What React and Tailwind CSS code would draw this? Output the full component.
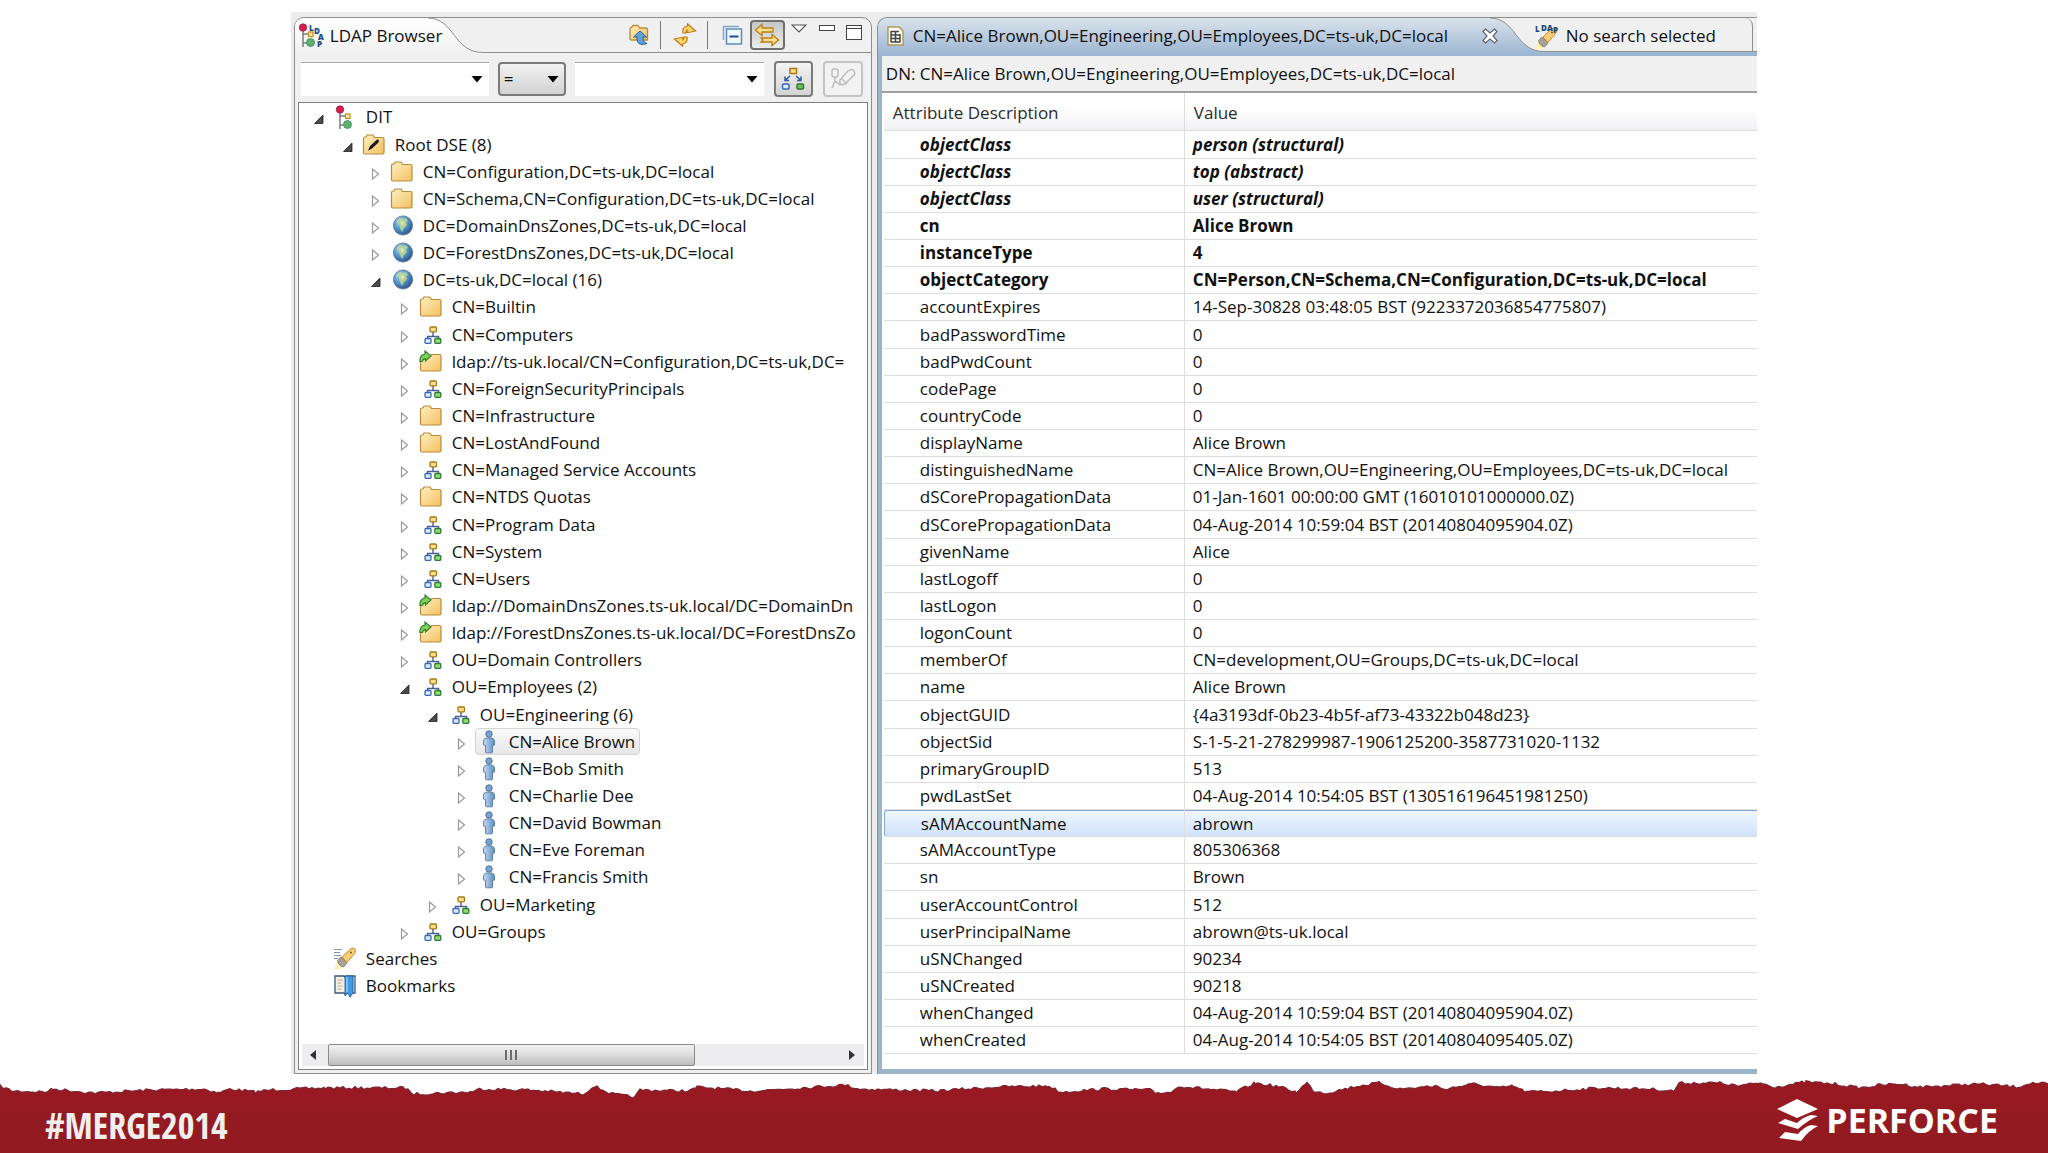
import { useState } from 'react'
import clsx from 'clsx'

const TREE = [
  { level: 0, icon: 'dit', label: 'DIT', open: true },
  { level: 1, icon: 'root', label: 'Root DSE (8)', open: true },
  { level: 2, icon: 'folder', label: 'CN=Configuration,DC=ts-uk,DC=local' },
  { level: 2, icon: 'folder', label: 'CN=Schema,CN=Configuration,DC=ts-uk,DC=local' },
  { level: 2, icon: 'globe', label: 'DC=DomainDnsZones,DC=ts-uk,DC=local' },
  { level: 2, icon: 'globe', label: 'DC=ForestDnsZones,DC=ts-uk,DC=local' },
  { level: 2, icon: 'globe', label: 'DC=ts-uk,DC=local (16)', open: true },
  { level: 3, icon: 'folder', label: 'CN=Builtin' },
  { level: 3, icon: 'org', label: 'CN=Computers' },
  { level: 3, icon: 'link', label: 'ldap://ts-uk.local/CN=Configuration,DC=ts-uk,DC=' },
  { level: 3, icon: 'org', label: 'CN=ForeignSecurityPrincipals' },
  { level: 3, icon: 'folder', label: 'CN=Infrastructure' },
  { level: 3, icon: 'folder', label: 'CN=LostAndFound' },
  { level: 3, icon: 'org', label: 'CN=Managed Service Accounts' },
  { level: 3, icon: 'folder', label: 'CN=NTDS Quotas' },
  { level: 3, icon: 'org', label: 'CN=Program Data' },
  { level: 3, icon: 'org', label: 'CN=System' },
  { level: 3, icon: 'org', label: 'CN=Users' },
  { level: 3, icon: 'link', label: 'ldap://DomainDnsZones.ts-uk.local/DC=DomainDn' },
  { level: 3, icon: 'link', label: 'ldap://ForestDnsZones.ts-uk.local/DC=ForestDnsZo' },
  { level: 3, icon: 'org', label: 'OU=Domain Controllers' },
  { level: 3, icon: 'org', label: 'OU=Employees (2)', open: true },
  { level: 4, icon: 'org', label: 'OU=Engineering (6)', open: true },
  { level: 5, icon: 'person', label: 'CN=Alice Brown' },
  { level: 5, icon: 'person', label: 'CN=Bob Smith' },
  { level: 5, icon: 'person', label: 'CN=Charlie Dee' },
  { level: 5, icon: 'person', label: 'CN=David Bowman' },
  { level: 5, icon: 'person', label: 'CN=Eve Foreman' },
  { level: 5, icon: 'person', label: 'CN=Francis Smith' },
  { level: 4, icon: 'org', label: 'OU=Marketing' },
  { level: 3, icon: 'org', label: 'OU=Groups' },
  { level: 0, icon: 'searches', label: 'Searches', leaf: true },
  { level: 0, icon: 'bookmarks', label: 'Bookmarks', leaf: true },
]

const ENTRY_DN = 'CN=Alice Brown,OU=Engineering,OU=Employees,DC=ts-uk,DC=local'

// kind: 'class' = object class (bold italic), 'must' = mandatory attribute (bold)
const ATTRIBUTES = [
  ['objectClass', 'person (structural)', 'class'],
  ['objectClass', 'top (abstract)', 'class'],
  ['objectClass', 'user (structural)', 'class'],
  ['cn', 'Alice Brown', 'must'],
  ['instanceType', '4', 'must'],
  ['objectCategory', 'CN=Person,CN=Schema,CN=Configuration,DC=ts-uk,DC=local', 'must'],
  ['accountExpires', '14-Sep-30828 03:48:05 BST (9223372036854775807)'],
  ['badPasswordTime', '0'],
  ['badPwdCount', '0'],
  ['codePage', '0'],
  ['countryCode', '0'],
  ['displayName', 'Alice Brown'],
  ['distinguishedName', ENTRY_DN],
  ['dSCorePropagationData', '01-Jan-1601 00:00:00 GMT (16010101000000.0Z)'],
  ['dSCorePropagationData', '04-Aug-2014 10:59:04 BST (20140804095904.0Z)'],
  ['givenName', 'Alice'],
  ['lastLogoff', '0'],
  ['lastLogon', '0'],
  ['logonCount', '0'],
  ['memberOf', 'CN=development,OU=Groups,DC=ts-uk,DC=local'],
  ['name', 'Alice Brown'],
  ['objectGUID', '{4a3193df-0b23-4b5f-af73-43322b048d23}'],
  ['objectSid', 'S-1-5-21-278299987-1906125200-3587731020-1132'],
  ['primaryGroupID', '513'],
  ['pwdLastSet', '04-Aug-2014 10:54:05 BST (130516196451981250)'],
  ['sAMAccountName', 'abrown'],
  ['sAMAccountType', '805306368'],
  ['sn', 'Brown'],
  ['userAccountControl', '512'],
  ['userPrincipalName', 'abrown@ts-uk.local'],
  ['uSNChanged', '90234'],
  ['uSNCreated', '90218'],
  ['whenChanged', '04-Aug-2014 10:59:04 BST (20140804095904.0Z)'],
  ['whenCreated', '04-Aug-2014 10:54:05 BST (20140804095405.0Z)'],
]

function Gradients() {
  return (
    <svg className="absolute h-0 w-0" aria-hidden="true">
      <defs>
        <linearGradient id="folderFill" x1="0" y1="0" x2="1" y2="1">
          <stop offset="0" stopColor="#fff0c0" />
          <stop offset="1" stopColor="#f3c060" />
        </linearGradient>
        <radialGradient id="globeFill" cx=".35" cy=".3" r=".8">
          <stop offset="0" stopColor="#a9d9ef" />
          <stop offset=".5" stopColor="#4f93c4" />
          <stop offset="1" stopColor="#2c4580" />
        </radialGradient>
        <linearGradient id="tabFill" x1="0" y1="0" x2="0" y2="1">
          <stop offset="0" stopColor="#ffffff" />
          <stop offset="1" stopColor="#f0f0f0" />
        </linearGradient>
        <linearGradient id="bodyFill" x1="0" y1="0" x2="1" y2="0">
          <stop offset="0" stopColor="#c4dcf3" />
          <stop offset="1" stopColor="#5d8cc0" />
        </linearGradient>
      </defs>
    </svg>
  )
}

function FolderShape() {
  return (
    <path
      d="M1.500 5.500q0-1.500 1.500-1.500h1l1-2h6l1.500 2.500h8q1.500 0 1.500 1.500v13.500q0 1.500-1.500 1.500h-17.500q-1.500 0-1.500-1.500z"
      fill="url(#folderFill)"
      stroke="#b98a3e"
      strokeWidth="1.200"
    />
  )
}

function DitShape() {
  return (
    <>
      <path d="M4 6v18M4 11h8M4 20h6" stroke="#7d7d7d" strokeWidth="1.500" fill="none" />
      <circle cx="4" cy="4.500" r="3.800" fill="#d0204c" stroke="#a01238" strokeWidth=".6" />
      <rect x="9.500" y="9" width="4.500" height="4.500" fill="#ffe9a0" stroke="#c08a1e" strokeWidth="1.200" />
      <circle cx="11.500" cy="19.500" r="4" fill="#5fb070" stroke="#3c8c50" strokeWidth=".8" />
    </>
  )
}

function FlashlightShape() {
  return (
    <>
      <path d="M1 22 5 12l6 6-4 5z" fill="#fff2b8" />
      <path d="M4.500 13.500 8 10l6 6-3.500 4q-5-1-6-6.500z" fill="#a9a096" stroke="#7c746a" strokeWidth=".8" />
      <path d="m9 10 9-8.500q3-1 4 .5t0 4L14 15.500z" fill="#f5cf74" stroke="#c08e3a" strokeWidth="1" />
      <circle cx="18" cy="5.500" r="1" fill="#7a5a20" />
    </>
  )
}

function TreeIcon({ name }) {
  return (
    <svg viewBox="0 0 24 24" className="h-6 w-6 shrink-0" aria-hidden="true">
      {name === 'dit' && (
        <g transform="translate(3 0)">
          <DitShape />
        </g>
      )}
      {(name === 'folder' || name === 'root') && <FolderShape />}
      {name === 'root' && <path d="M6 17.500 8 13l7-6.500 2 .5-.5 2.500-7 6.500z" fill="#1c1c1c" />}
      {name === 'link' && (
        <>
          <path
            d="M1.500 8q0-1.500 1.500-1.500h8l1.500-2h8q1.500 0 1.500 1.500v13.500q0 1.500-1.500 1.500h-17.500q-1.500 0-1.500-1.500z"
            fill="url(#folderFill)"
            stroke="#b98a3e"
            strokeWidth="1.200"
          />
          <path d="M1 11.500q-.5-6.500 5-7.500V1l6 5-5.500 5V8.500q-2.500 0-3 3z" fill="#7fd05a" stroke="#2e7d2a" strokeWidth="1.100" />
        </>
      )}
      {name === 'globe' && (
        <>
          <circle cx="13" cy="11.500" r="9.600" fill="url(#globeFill)" stroke="#5c7190" strokeWidth=".8" />
          <path d="m7 6 3-2 3 1 3-1 2 3-2 1 1 3-3 3-2 4-2-4-1-4-2-1z" fill="#b7d59a" opacity=".9" />
          <path d="m11 7 3 1-1 4-2-2z" fill="#efe3a4" />
        </>
      )}
      {name === 'org' && (
        <>
          <path d="M14 9v5M8.500 16v-2.500h11V16" fill="none" stroke="#4a5f94" strokeWidth="1.400" />
          <rect x="11" y="4" width="6.500" height="4.800" rx="1" fill="#f8e08a" stroke="#a87718" strokeWidth="1.300" />
          <rect x="6" y="15.500" width="6" height="4.800" rx="1" fill="#d9ebff" stroke="#3a66b0" strokeWidth="1.300" />
          <rect x="15.800" y="15.500" width="6" height="4.800" rx="1" fill="#8fdc70" stroke="#2c7a38" strokeWidth="1.300" />
        </>
      )}
      {name === 'person' && (
        <>
          <circle cx="13" cy="4" r="3.200" fill="#7ba3cf" stroke="#41699a" strokeWidth=".9" />
          <path
            d="M10 8h6q2.500 1 2.500 3v4l-2 .5V22q0 .8-1 .8h-5q-1 0-1-.8v-6.500l-2-.5v-4q0-2 2.500-3z"
            fill="url(#bodyFill)"
            stroke="#54799f"
            strokeWidth=".9"
          />
        </>
      )}
      {name === 'searches' && (
        <>
          <path d="M1 2.500h8M1 5.500h6M1 8.500h7M1 11.500h4" stroke="#7d93b8" strokeWidth="1.200" />
          <FlashlightShape />
        </>
      )}
      {name === 'bookmarks' && (
        <>
          <path d="M2 2h9l1 1 1-1h9v17h-9l-1 1-1-1H2z" fill="#f5efe2" stroke="#3c5878" strokeWidth="1.300" />
          <path d="M4.500 6h5M4.500 9h4M4.500 12h5M4.500 15h4" stroke="#b5ab98" strokeWidth="1" />
          <path d="M12 2v20l3-3 2 4 3-4V2z" fill="#3f9be0" stroke="#1f5f9c" strokeWidth=".9" />
          <path d="M14 3v15" stroke="#a9d6f8" strokeWidth="1.200" />
        </>
      )}
    </svg>
  )
}

function LdapLetters({ arc }) {
  const spots = arc
    ? [[10, 8], [15, 11], [19, 17], [18, 24]]
    : [[1, 8], [7, 7], [13, 7], [19, 9]]
  return 'LDAP'.split('').map((ch, i) => (
    <text key={i} x={spots[i][0]} y={spots[i][1]} className="fill-[#1c4a80] font-['Open_Sans',sans-serif] text-[8px] font-extrabold">
      {ch}
    </text>
  ))
}

function DropArrow() {
  return (
    <svg viewBox="0 0 12 7" className="h-[7px] w-3" aria-hidden="true">
      <path d="M.5 0h11L6 6.500z" fill="#000" />
    </svg>
  )
}

function ComboBox({ label, className }) {
  return (
    <div className={clsx('flex h-[34px] items-center border-t border-[#a9a9a9] bg-white pr-[6px]', className)}>
      <input type="text" aria-label={label} className="h-full w-full min-w-0 px-1 outline-none" />
      <button type="button" aria-label={`${label} history`}>
        <DropArrow />
      </button>
    </div>
  )
}

function ViewToolbar() {
  return (
    <div className="flex flex-1 items-center justify-end border-b border-[#8e8e8e] pr-[9px]">
      <button type="button" aria-label="Up">
        <svg viewBox="0 0 22 22" className="h-[22px] w-[22px]">
          <path d="M2 5q0-1.500 1.500-1.500L5 1.500h5L11.500 4H18q1.500 0 1.500 1.500V16H3.500Q2 16 2 14.500z" fill="url(#folderFill)" stroke="#b98a3e" strokeWidth="1.300" />
          <path d="m12 7 6.500 6H15q-.5 5 4 6.500-8 2.500-9.500-2Q9 15.500 9 13H5.500z" fill="#5ea4d6" stroke="#23608f" strokeWidth="1" />
        </svg>
      </button>
      <span className="ml-[10px] h-7 w-px bg-[#7a7a7a]" />
      <button type="button" aria-label="Refresh" className="ml-3">
        <svg viewBox="0 0 24 24" className="h-6 w-6" fill="#fbd66e" stroke="#bb7d17" strokeWidth="1.200">
          <path d="M10 10q-1-6 4.500-7V.8L18 4l4.500 4-4.500 1-4 .5V7q-1 .5-1 3z" />
          <path d="M14 14q1 6-4.500 7v2.200L6 20l-4.500-4 4.500-1 4-.5V17q1-.5 1-3z" />
        </svg>
      </button>
      <span className="ml-[10px] h-7 w-px bg-[#7a7a7a]" />
      <button type="button" aria-label="Collapse all" className="ml-[14px]">
        <svg viewBox="0 0 22 22" className="h-[22px] w-[22px]">
          <path d="M1.500 16V2.500H17" fill="none" stroke="#7fa6cf" strokeWidth="1.500" />
          <rect x="4.500" y="5" width="15" height="15" fill="#eef8ff" stroke="#5d8cba" strokeWidth="1.500" />
          <path d="M7.500 12.500h9" stroke="#1d4f91" strokeWidth="2" />
        </svg>
      </button>
      <button type="button" aria-label="Link with editor" aria-pressed="true" className="ml-[6px] flex h-[30px] w-[35px] items-center justify-center rounded-[4px] border-2 border-[#6f6f6f] bg-linear-to-b from-[#c6c6c6] to-[#ececec]">
        <svg viewBox="0 0 26 26" className="h-[26px] w-[26px] shrink-0" fill="#fde08a" stroke="#bb7d17" strokeWidth="1.300">
          <path d="M1.500 8 8 2.500v3.500h11v4H8v3.500z" />
          <path d="m24.500 18-6.500-5.500V16H7l2 2-2 2h11v3.500z" />
        </svg>
      </button>
      <button type="button" aria-label="View menu" className="ml-[6px] self-start pt-[6px]">
        <svg viewBox="0 0 16 9" className="h-[9px] w-4">
          <path d="M1 1h14L8 8z" fill="#fff" stroke="#555" strokeWidth="1.200" />
        </svg>
      </button>
      <button type="button" aria-label="Minimize" className="ml-3 self-start pt-[7px]">
        <span className="block h-[6px] w-4 border border-[#444] bg-white" />
      </button>
      <button type="button" aria-label="Maximize" className="ml-[11px] self-start pt-[7px]">
        <span className="block h-[15px] w-4 border border-[#444] bg-white">
          <span className="mt-[2px] block h-px bg-[#444]" />
        </span>
      </button>
    </div>
  )
}

function TreeRow({ node, selected, onSelect }) {
  return (
    <li
      role="treeitem"
      aria-selected={selected}
      className="flex h-[27px] items-center nth-[7n+1]:h-[28px]"
      style={{ paddingLeft: 15 + Math.round(node.level * 28.6) }}
    >
      <button type="button" aria-label={`Toggle ${node.label}`} disabled={node.leaf} className="mr-2 w-[10px] shrink-0 pt-1">
        {!node.leaf && (
          <svg viewBox="0 0 10 12" className="h-3 w-[10px]">
            {node.open ? (
              <path d="M9 2v8.500H.5z" fill="#4a4a4a" stroke="#222" strokeWidth=".8" />
            ) : (
              <path d="M1.500 1v10l6-5z" fill="#fff" stroke="#9a9a9a" strokeWidth="1.200" />
            )}
          </svg>
        )}
      </button>
      <button
        type="button"
        onClick={onSelect}
        className={clsx(
          'flex h-[27px] shrink-0 items-center gap-[9px] rounded-[4px] border pr-1 whitespace-nowrap',
          selected ? 'border-[#d4d4d4] bg-linear-to-b from-[#fafafa] to-[#e6e6e6]' : 'border-transparent'
        )}
      >
        <TreeIcon name={node.icon} />
        {node.label}
      </button>
    </li>
  )
}

function BrowserView() {
  const [selected, setSelected] = useState('CN=Alice Brown')

  return (
    <section className="flex w-[578px] shrink-0 flex-col rounded-t-[10px] border border-[#8e8e8e] bg-[#f0f0f0]">
      <div className="flex h-[35px]">
        <h2 className="relative flex w-[188px] items-center gap-[5px] pl-1">
          <svg viewBox="0 0 188 35" className="absolute inset-0 h-[35px] w-[188px]" aria-hidden="true">
            <path d="M0 35V10Q0 0 10 0h123C160 .5 158 34.500 188 34.500V35z" fill="url(#tabFill)" />
            <path d="M133 0C160 .5 158 34.500 188 34.500" fill="none" stroke="#8e8e8e" />
          </svg>
          <svg viewBox="0 0 26 26" className="relative h-[26px] w-[26px] overflow-visible" aria-hidden="true">
            <DitShape />
            <LdapLetters arc />
          </svg>
          <span className="relative whitespace-nowrap">LDAP Browser</span>
        </h2>
        <ViewToolbar />
      </div>

      {/* Quick search */}
      <div className="flex h-[49px] items-center pt-[2px] pr-2 pl-[6px]">
        <ComboBox label="Attribute" className="w-[188px]" />
        <div className="relative ml-[9px] w-[68px]">
          <select aria-label="Operator" className="h-[34px] w-full appearance-none rounded-[4px] border-2 border-[#7b7b7b] bg-linear-to-b from-[#f2f2f2] to-[#d2d2d2] pl-1 outline-none">
            <option>=</option>
            <option>~=</option>
            <option>!=</option>
          </select>
          <span className="pointer-events-none absolute top-[14px] right-[7px]">
            <DropArrow />
          </span>
        </div>
        <ComboBox label="Value" className="ml-[9px] flex-1" />
        <button type="button" aria-label="Search subtree" className="ml-[10px] flex h-9 w-[39px] items-center justify-center rounded-[4px] border-2 border-[#7b7b7b] bg-linear-to-b from-[#f4f4f4] to-[#d4d4d4]">
          <svg viewBox="0 0 24 24" className="h-6 w-6" fill="none">
            <rect x="9" y="1.500" width="6.500" height="5" fill="#fbe08a" stroke="#a87718" strokeWidth="1.500" />
            <path d="M9 9 4 13.500M4 9.500v4h4M15 9l5 4.500M20 9.500v4h-4" stroke="#2c5a9c" strokeWidth="1.500" />
            <rect x="1.500" y="17" width="6.500" height="5" rx="1" fill="#d9ebff" stroke="#3a66b0" strokeWidth="1.500" />
            <rect x="16" y="17" width="6.500" height="5" rx="1" fill="#6fc258" stroke="#2c7a38" strokeWidth="1.500" />
          </svg>
        </button>
        <button type="button" disabled aria-label="Run search" className="ml-[10px] flex h-9 w-[40px] items-center justify-center rounded-[4px] border-2 border-[#c4c4c4] bg-[#f2f2f2]">
          <svg viewBox="0 0 26 24" className="h-6 w-[26px]" fill="none" stroke="#bdbdbd" strokeWidth="1.500">
            <rect x="2" y="2" width="6" height="8" rx="2" />
            <path d="M5 10v4l-3 7M5 14l5 4M10 13l8-9q4-3 6 0t-1 5l-8 8-3 1q-3-1-2-5zM12 12l5 5" />
          </svg>
        </button>
      </div>

      <div className="mx-[3px] mb-[3px] flex flex-1 flex-col border border-[#7d7d7d] bg-white">
        <ul role="tree" aria-label="LDAP Browser" className="flex-1 overflow-hidden pb-[43px]">
          {TREE.map((node) => (
            <TreeRow
              key={node.label}
              node={node}
              selected={selected === node.label}
              onSelect={() => setSelected(node.label)}
            />
          ))}
        </ul>

        {/* Horizontal scrollbar */}
        <div className="mx-[3px] mb-[3px] flex h-[22px] items-center bg-[#ededef]">
          <button type="button" aria-label="Scroll left" className="flex w-[26px] justify-center pr-[3px]">
            <svg viewBox="0 0 6 10" className="h-[10px] w-[6px]"><path d="M6 0v10L0 5z" fill="#333" /></svg>
          </button>
          <div className="h-full flex-1">
            <div className="flex h-full w-[72%] items-center justify-center gap-[3px] rounded-[2px] border border-[#8a8a8a] bg-linear-to-b from-[#f2f2f2] via-[#dcdcdc] to-[#bdbdbd]">
              <span className="h-[10px] w-[2px] bg-[#6b6b6b]" />
              <span className="h-[10px] w-[2px] bg-[#6b6b6b]" />
              <span className="h-[10px] w-[2px] bg-[#6b6b6b]" />
            </div>
          </div>
          <button type="button" aria-label="Scroll right" className="flex w-[26px] justify-center pl-[3px]">
            <svg viewBox="0 0 6 10" className="h-[10px] w-[6px]"><path d="M0 0v10l6-5z" fill="#333" /></svg>
          </button>
        </div>
      </div>
    </section>
  )
}

function EditorTabs() {
  return (
    <div className="flex h-[38px] items-start overflow-hidden rounded-tl-[9px] bg-linear-to-b from-[#dbe3ec] to-[#99b4d1] pb-1">
      <div className="flex h-[35px] shrink-0 items-center gap-[9px] pl-[9px] whitespace-nowrap">
        <svg viewBox="0 0 17 20" className="h-5 w-[17px]" aria-hidden="true">
          <path d="M1 1h11l4 4v14H1z" fill="#fff" stroke="#b09a52" strokeWidth="1.500" />
          <path d="M4 5.500h8M4 9h9M4 12.500h9M4 16h9M4 5v11.500M8.500 5v11.500M13 8v8.500" stroke="#444" strokeWidth="1.500" />
        </svg>
        <span className="min-w-[557px]">{ENTRY_DN}</span>
        <button type="button" aria-label="Close" className="ml-[3px]">
          <svg viewBox="0 0 16 16" className="h-4 w-4">
            <path d="m1 3.500 2.500-2.500L8 5l4.500-4L15 3.500 11 8l4 4.500-2.500 2.500L8 11l-4.500 4L1 12.500 5 8z" fill="#fff" stroke="#5b6470" strokeWidth="1.200" />
          </svg>
        </button>
      </div>
      <svg viewBox="0 0 54 34" className="-ml-2 h-[34px] w-[54px] shrink-0" aria-hidden="true">
        <path d="M0 0C27 .5 25 33.500 54 33.500V0z" fill="#f0f0f0" />
        <path d="M0 0C27 .5 25 33.500 54 33.500" fill="none" stroke="#8e8e8e" />
      </svg>
      <div className="flex h-[34px] flex-1 border-b border-[#8e8e8e] bg-[#f0f0f0]">
        <div className="-ml-[10px] flex w-[219px] shrink-0 items-center gap-[6px] rounded-tr-[8px] border-r border-[#8e8e8e] pt-[2px] whitespace-nowrap">
          <svg viewBox="0 0 26 24" className="h-6 w-[26px] overflow-visible" aria-hidden="true">
            <g transform="translate(0 3)">
              <FlashlightShape />
            </g>
            <LdapLetters />
          </svg>
          No search selected
        </div>
      </div>
    </div>
  )
}

function EntryEditor() {
  const [selected, setSelected] = useState('sAMAccountName')

  return (
    <section className="ml-[5px] flex min-w-0 flex-1 flex-col rounded-tl-[10px] border-t border-l border-[#8e8e8e] bg-[#9bb4ca]">
      <EditorTabs />
      <div className="mb-[5px] ml-1 flex flex-1 flex-col overflow-hidden bg-white">
        <p className="flex h-[37px] items-center border-b-2 border-[#a0a0a0] bg-[#f0f0f0] pl-1 whitespace-nowrap">DN: {ENTRY_DN}</p>
        <table className="ml-[2px] table-fixed border-separate border-spacing-0 text-left whitespace-nowrap">
          <colgroup>
            <col className="w-[301px]" />
            <col />
          </colgroup>
          <thead>
            <tr className="h-[38px] bg-linear-to-b from-white from-40% to-[#f1f1f4] text-[#2b2b2b]">
              <th scope="col" className="border-r border-b border-[#dcdcdc] pt-[3px] pl-[9px] font-normal">Attribute Description</th>
              <th scope="col" className="border-b border-[#dcdcdc] pt-[3px] pl-[9px] font-normal">Value</th>
            </tr>
          </thead>
          <tbody>
            {ATTRIBUTES.map(([name, value, kind], i) => {
              const active = name === selected
              return (
                <tr
                  key={i}
                  onClick={() => setSelected(name)}
                  className={clsx(
                    'h-[27px] nth-[7n+1]:h-[28px]',
                    kind && 'font-bold',
                    kind === 'class' && 'italic',
                    active && 'bg-linear-to-b from-[#f0f6fe] to-[#cfe2fb]'
                  )}
                >
                  <td className={clsx('border-r border-b border-[#dedede] pl-9', active && 'rounded-l-[3px] border-t border-l border-t-[#84a9d6] border-l-[#84a9d6]')}>{name}</td>
                  <td className={clsx('border-b border-[#dedede] pl-2', active && 'border-t border-t-[#84a9d6]')}>{value}</td>
                </tr>
              )
            })}
          </tbody>
        </table>
      </div>
    </section>
  )
}

// Rough outline of the torn strip: [x, y] pairs, the noise between them is added below
const TEAR = [
  [0, 12], [12, 17], [45, 18], [53, 15], [95, 19], [150, 16], [205, 15], [218, 19], [230, 15], [255, 18],
  [270, 16], [325, 14], [405, 14], [414, 20], [470, 18], [480, 15], [530, 16], [583, 20], [594, 12],
  [612, 20], [635, 23], [640, 16], [690, 17], [697, 13], [750, 17], [800, 14], [845, 11], [860, 15],
  [935, 17], [997, 13], [1049, 12], [1060, 18], [1105, 15], [1150, 16], [1155, 19], [1172, 18],
  [1178, 12], [1236, 18], [1255, 9], [1280, 13], [1296, 18], [1307, 9], [1314, 17], [1327, 19],
  [1357, 12], [1379, 9], [1400, 15], [1435, 12], [1444, 15], [1474, 10], [1500, 14], [1513, 12],
  [1526, 18], [1556, 17], [1600, 14], [1650, 15], [1674, 17], [1679, 9], [1720, 9], [1738, 12],
  [1760, 9], [1775, 13], [1806, 8], [1835, 10], [1860, 14], [1880, 11], [1900, 10], [1920, 13],
  [1980, 10], [2018, 13], [2030, 9], [2048, 10],
]

function tearPath() {
  const points = []
  let seed = 7
  for (let i = 0; i < TEAR.length - 1; i++) {
    const [x0, y0] = TEAR[i]
    const [x1, y1] = TEAR[i + 1]
    for (let x = x0; x < x1; x += 3) {
      seed = (seed * 16807) % 2147483647
      const noise = (seed / 2147483647) * 3 - 1.5
      points.push(`${x} ${(y0 + ((y1 - y0) * (x - x0)) / (x1 - x0) + noise).toFixed(1)}`)
    }
  }
  return `M${points.join('L')}L2048 10V27H0Z`
}

function Footer() {
  return (
    <footer className="text-white">
      <svg viewBox="0 0 2048 24" preserveAspectRatio="none" className="block h-6 w-full" aria-hidden="true">
        <path d={tearPath()} fill="#981921" stroke="#7d2430" strokeWidth="1.200" />
      </svg>
      <div className="flex h-[55px] items-center justify-between bg-linear-to-b from-[#981921] to-[#941a22] to-30% pr-[50px] pl-[45px]">
        <span className="font-['Liberation_Sans_Narrow','Open_Sans_Condensed','Roboto_Condensed','Open_Sans',sans-serif] text-[36px] leading-none font-bold text-[#f1eeee]">
          #MERGE2014
        </span>
        <div className="flex items-center gap-2 pb-3">
          <svg viewBox="0 0 41 42" className="h-[42px] w-[41px]" fill="#fff" aria-hidden="true">
            <path d="M0 10 20 0l21 10-21 9z" />
            <path d="m1 24 7-4 12 4q6-6 14-8l7 1q-10 4-20 13z" />
            <path d="m2 39 6-6 13 2q6-7 13-9l7 1q-9 4-17 15z" />
          </svg>
          <span className="font-['Open_Sans',sans-serif] text-[34px] leading-none font-bold">PERFORCE</span>
        </div>
      </div>
    </footer>
  )
}

export default function App() {
  return (
    <div className="flex min-h-screen flex-col bg-white font-['Open_Sans','Noto_Sans',sans-serif] text-[17px] leading-[22px] text-[#111]">
      <Gradients />
      <main className="flex flex-1 px-[14.2%] pt-3">
        <div className="flex min-w-0 flex-1 bg-[#ececec] pt-[5px] pl-[3px]">
          <BrowserView />
          <EntryEditor />
        </div>
      </main>
      <Footer />
    </div>
  )
}
